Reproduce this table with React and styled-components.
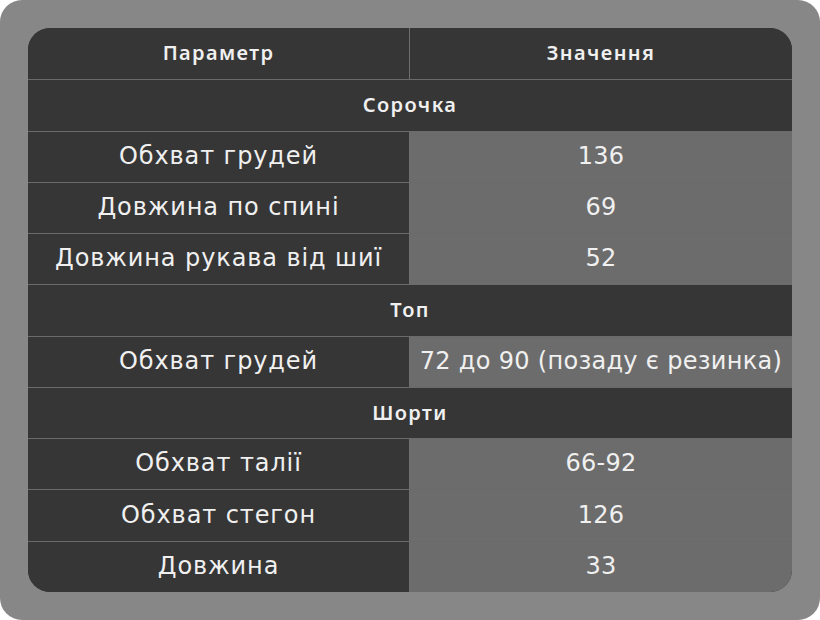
import React from 'react';
import styled, { createGlobalStyle } from 'styled-components';

const GlobalStyle = createGlobalStyle`
  html, body {
    margin: 0;
    padding: 0;
    background: #ffffff;
  }
  * {
    box-sizing: border-box;
  }
`

const Frame = styled.div`
  width: 820px;
  height: 620px;
  padding: 28px;
  background: #878787;
  border-radius: 22px;
`

const Table = styled.div`
  display: grid;
  grid-template-columns: 381px 1fr;
  grid-auto-rows: 1fr;
  height: 100%;
  border-radius: 22px;
  overflow: hidden;
  background: #363636;
  color: #f0f0f0;
`

const Cell = styled.div`
  display: flex;
  align-items: center;
  justify-content: center;
  padding-bottom: 2px;
  background: ${p => (p.$value ? '#6c6c6c' : '#363636')};
  border-top: ${p => (p.$first ? 'none' : '1px solid #6a6a6a')};
  border-left: ${p => (p.$right ? '1px solid #6e6e6e' : 'none')};
  font-family: "DejaVu Sans", "Noto Sans", sans-serif;
  font-size: 24px;
  letter-spacing: ${p => (p.$value ? '0.3px' : '0.9px')};
  white-space: nowrap;
`

const HeadCell = styled(Cell)`
  grid-column: ${p => (p.$span ? '1 / 3' : 'auto')};
  font-family: "Noto Sans", "Open Sans", sans-serif;
  font-size: 20px;
  font-weight: 600;
  letter-spacing: 1.4px;
`

const sections = [
  {
    title: 'Сорочка',
    rows: [
      ['Обхват грудей', '136'],
      ['Довжина по спині', '69'],
      ['Довжина рукава від шиї', '52'],
    ],
  },
  {
    title: 'Топ',
    rows: [['Обхват грудей', '72 до 90 (позаду є резинка)']],
  },
  {
    title: 'Шорти',
    rows: [
      ['Обхват талії', '66-92'],
      ['Обхват стегон', '126'],
      ['Довжина', '33'],
    ],
  },
]

export default function App() {
  return (
    <>
      <GlobalStyle />
      <Frame>
        <Table>
          <HeadCell $first>Параметр</HeadCell>
          <HeadCell $first $right>Значення</HeadCell>
          {sections.map(section => (
            <React.Fragment key={section.title}>
              <HeadCell $span>{section.title}</HeadCell>
              {section.rows.map(([name, value]) => (
                <React.Fragment key={name + value}>
                  <Cell>{name}</Cell>
                  <Cell $value $right>{value}</Cell>
                </React.Fragment>
              ))}
            </React.Fragment>
          ))}
        </Table>
      </Frame>
    </>
  );
}
